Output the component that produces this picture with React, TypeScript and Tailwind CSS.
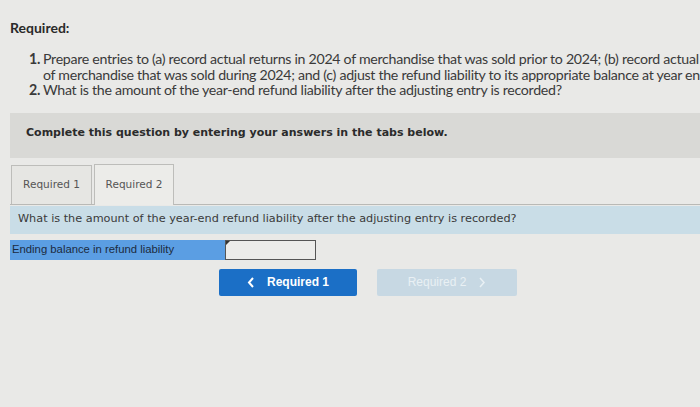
export default function App() {
  return (
    <div className="relative h-[407px] w-[700px] overflow-hidden bg-[#e9e9e7] text-[#333]">
      {/* 요구사항 */}
      <div className="pl-[10px] pt-[19px] font-['Lato',sans-serif]">
        <h2 className="text-[14px] font-bold leading-[18px] text-[#2a2a2a]">Required:</h2>
        <ol className="mt-[14px] whitespace-nowrap text-[14.2px] leading-[15.5px] tracking-[-0.3px] text-[#3a3a3a]">
          <li className="flex">
            <span className="w-[33px] shrink-0 pl-[19px] font-bold">1.</span>
            <span>
              Prepare entries to (a) record actual returns in 2024 of merchandise that was sold prior to 2024; (b) record actual returns
              <br />
              of merchandise that was sold during 2024; and (c) adjust the refund liability to its appropriate balance at year end.
            </span>
          </li>
          <li className="flex">
            <span className="w-[33px] shrink-0 pl-[19px] font-bold">2.</span>
            <span>What is the amount of the year-end refund liability after the adjusting entry is recorded?</span>
          </li>
        </ol>
      </div>

      {/* 안내 밴드 */}
      <div className="ml-[10px] mt-[15px] flex h-[45px] items-center bg-[#d9d9d6] pb-[3px] pl-[16px] font-['DejaVu_Sans',sans-serif] text-[11px] font-bold text-[#2b2b2b]">
        Complete this question by entering your answers in the tabs below.
      </div>

      {/* 탭 */}
      <div className="ml-[10px] mt-[6px] flex items-end gap-[2px] border-b border-[#b9b9b6] font-['DejaVu_Sans',sans-serif] text-[10.5px] text-[#555]">
        <div className="ml-[1px] flex h-[39px] w-[81px] items-center justify-center border border-b-0 border-[#bdbdba] bg-[#e6e6e3]">
          Required 1
        </div>
        <div className="mb-[-1px] flex h-[41px] w-[80px] items-center justify-center border border-b-0 border-[#bdbdba] bg-[#ecece9]">
          Required 2
        </div>
      </div>

      {/* 질문 */}
      <div className="ml-[10px] mt-[1px] flex h-[28px] items-center bg-[#c9dde7] pl-[8px] font-['DejaVu_Sans',sans-serif] text-[11.25px] text-[#3a3a3a]">
        What is the amount of the year-end refund liability after the adjusting entry is recorded?
      </div>

      {/* 입력 행 */}
      <div className="ml-[10px] mt-[6px] flex h-[20px]">
        <div className="flex w-[215px] items-center bg-[#5b9ee3] pl-[2px] font-['Liberation_Sans',sans-serif] text-[11.3px] text-[#1c2b40]">
          Ending balance in refund liability
        </div>
        <div className="relative w-[91px] border border-[#555] bg-[#ececea]">
          <span className="absolute left-0 top-0 h-0 w-0 border-r-[4px] border-t-[4px] border-r-transparent border-t-[#333]" />
        </div>
      </div>

      {/* 버튼 */}
      <div className="ml-[219px] mt-[9px] flex gap-[20px] font-['Liberation_Sans',sans-serif] text-[12px] font-bold">
        <button className="flex h-[27px] w-[138px] items-center justify-center gap-[12px] rounded-[2px] bg-[#1b6fc6] text-white">
          <svg width="8" height="11" viewBox="0 0 8 11" fill="none" stroke="currentColor" strokeWidth="2">
            <path d="M6 1L2 5.5L6 10" />
          </svg>
          Required 1
        </button>
        <button className="flex h-[27px] w-[140px] items-center justify-center gap-[12px] rounded-[2px] bg-[#c7d8e3] font-normal text-[#e9f0f4]">
          Required 2
          <svg width="8" height="11" viewBox="0 0 8 11" fill="none" stroke="currentColor" strokeWidth="1.5">
            <path d="M2 1L6 5.5L2 10" />
          </svg>
        </button>
      </div>
    </div>
  )
}
